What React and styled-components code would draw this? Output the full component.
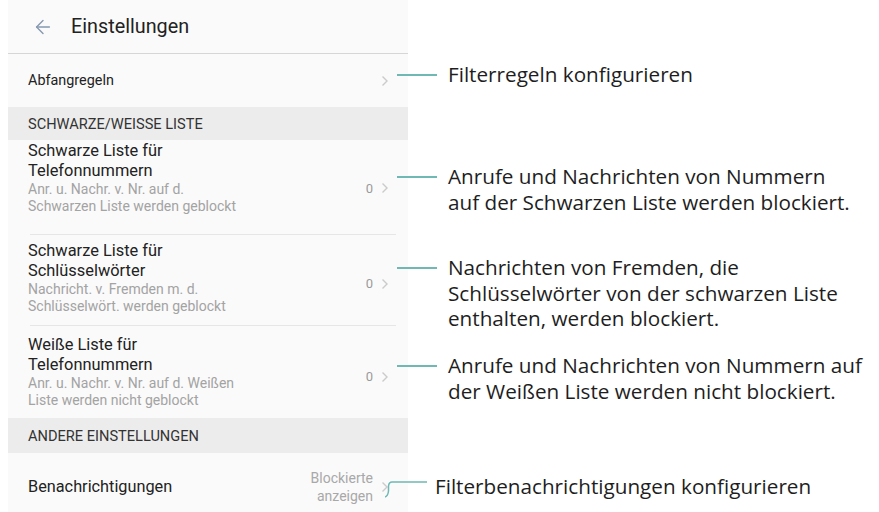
import React from 'react'
import styled, { createGlobalStyle } from 'styled-components'
import { ArrowLeft } from 'lucide-react'

const GlobalStyle = createGlobalStyle`
  html, body {
    margin: 0;
    padding: 0;
    background: #ffffff;
  }
  body {
    font-family: Roboto, "Noto Sans", sans-serif;
    color: #222;
  }
`

const settings = [
  {
    title: ['Abfangregeln'],
    size: 14.4,
    height: 53,
    pad: 0,
    centered: true,
    noteTop: 8,
    note: ['Filterregeln konfigurieren']
  },
  { section: 'SCHWARZE/WEISSE LISTE', height: 33 },
  {
    title: ['Schwarze Liste für', 'Telefonnummern'],
    sub: ['Anr. u. Nachr. v. Nr. auf d.', 'Schwarzen Liste werden geblockt'],
    value: '0',
    height: 95,
    pad: 1,
    divider: true,
    noteTop: 24,
    note: ['Anrufe und Nachrichten von Nummern', 'auf der Schwarzen Liste werden blockiert.']
  },
  {
    title: ['Schwarze Liste für', 'Schlüsselwörter'],
    sub: ['Nachricht. v. Fremden m. d.', 'Schlüsselwört. werden geblockt'],
    value: '0',
    height: 91,
    pad: 6,
    divider: true,
    noteTop: 20,
    note: ['Nachrichten von Fremden, die', 'Schlüsselwörter von der schwarzen Liste', 'enthalten, werden blockiert.']
  },
  {
    title: ['Weiße Liste für', 'Telefonnummern'],
    sub: ['Anr. u. Nachr. v. Nr. auf d. Weißen', 'Liste werden nicht geblockt'],
    value: '0',
    height: 92,
    pad: 9,
    noteTop: 27,
    note: ['Anrufe und Nachrichten von Nummern auf', 'der Weißen Liste werden nicht blockiert.']
  },
  { section: 'ANDERE EINSTELLUNGEN', height: 35 },
  {
    title: ['Benachrichtigungen'],
    size: 16.3,
    value: ['Blockierte', 'anzeigen'],
    height: 62,
    pad: 6,
    centered: true,
    bracket: true,
    noteTop: 21,
    note: ['Filterbenachrichtigungen konfigurieren']
  }
]

const Chevron = () => (
  <svg width="8" height="12" viewBox="0 0 8 12">
    <path d="M1.5 1.5 L6 6 L1.5 10.5" fill="none" stroke="#cbcbcb" strokeWidth="1.4" />
  </svg>
)

// teal pointer from the list entry to its explanation
const Leader = ({ bracket }) =>
  bracket ? (
    <LeaderSvg width="50" height="26" viewBox="0 0 50 26" shift={-12}>
      <path d="M0 23 Q3 22 3.5 17 L3.5 12 Q4 8 7 8 H42" fill="none" stroke="#6fb8b4" strokeWidth="1.5" />
    </LeaderSvg>
  ) : (
    <LeaderSvg width="51" height="26" viewBox="0 0 51 26" shift={0}>
      <path d="M0 13 H40" fill="none" stroke="#6fb8b4" strokeWidth="1.8" />
    </LeaderSvg>
  )

const App = () => {
  return (
    <>
      <GlobalStyle />
      <Page>
        <Line>
          <Header>
            <ArrowLeft size={22} strokeWidth={1.5} color="#8599b0" />
            <HeaderTitle>Einstellungen</HeaderTitle>
          </Header>
          <div />
        </Line>

        {settings.map((item, idx) => {
          if (item.section) {
            return (
              <Line key={idx}>
                <Section height={item.height}>{item.section}</Section>
                <div />
              </Line>
            )
          }
          return (
            <Line key={idx}>
              <Row height={item.height} pad={item.pad} centered={item.centered}>
                <RowText>
                  {item.title.map(t => <Title key={t} size={item.size}>{t}</Title>)}
                  {item.sub && item.sub.map(s => <Sub key={s}>{s}</Sub>)}
                </RowText>
                <RowValue>
                  {Array.isArray(item.value) ? (
                    <SmallValue>{item.value.map(v => <span key={v}>{v}</span>)}</SmallValue>
                  ) : (
                    item.value && <Value>{item.value}</Value>
                  )}
                  <Chevron />
                </RowValue>
                {item.divider && <Divider />}
              </Row>
              <Note top={item.noteTop}>
                <Leader bracket={item.bracket} />
                <NoteText>
                  {item.note.map(n => <span key={n}>{n}</span>)}
                </NoteText>
              </Note>
            </Line>
          )
        })}
      </Page>
    </>
  )
}

const Page = styled.div`
  width: 879px;
  height: 512px;
  overflow: hidden;
  padding-left: 8px;
  box-sizing: border-box;
`

const Line = styled.div`
  display: grid;
  grid-template-columns: 400px 1fr;
  align-items: start;
`

const Header = styled.div`
  height: 53px;
  border-bottom: 1px solid #d6d6d6;
  background: #fafafa;
  display: flex;
  align-items: center;
  padding-left: 24px;
  gap: 17px;
  box-sizing: content-box;
`

const HeaderTitle = styled.span`
  font-size: 19.8px;
  color: #222;
`

const Section = styled.div`
  height: ${p => p.height}px;
  background: #ececec;
  display: flex;
  align-items: center;
  padding-left: 20px;
  font-size: 14.6px;
  color: #333;
`

const Row = styled.div`
  position: relative;
  height: ${p => p.height}px;
  box-sizing: border-box;
  background: #fafafa;
  display: flex;
  align-items: ${p => (p.centered ? 'center' : 'flex-start')};
  padding: ${p => p.pad}px 19px 0 20px;
`

const RowText = styled.div`
  flex: 1;
  display: flex;
  flex-direction: column;
`

const Title = styled.span`
  font-size: ${p => p.size || 16.4}px;
  line-height: 20px;
  color: #222;
`

const Sub = styled.span`
  font-size: 14px;
  line-height: 16.5px;
  color: #a3a3a3;
  &:first-of-type {
    margin-top: 2px;
  }
`

const RowValue = styled.div`
  display: flex;
  align-items: center;
  gap: 8px;
  align-self: center;
`

const Value = styled.span`
  font-size: 13px;
  color: #9a9a9a;
`

const SmallValue = styled.span`
  display: flex;
  flex-direction: column;
  align-items: flex-end;
  font-size: 14px;
  line-height: 18px;
  color: #a8a8a8;
`

const Divider = styled.div`
  position: absolute;
  left: 22px;
  right: 12px;
  bottom: 0;
  height: 1px;
  background: #e6e6e6;
`

const Note = styled.div`
  position: relative;
  z-index: 1;
  display: flex;
  align-items: flex-start;
  height: 0;
  overflow: visible;
  margin-left: -11px;
  padding-top: ${p => p.top}px;
`

const LeaderSvg = styled.svg`
  flex: none;
  margin-left: ${p => p.shift}px;
`

const NoteText = styled.div`
  display: flex;
  flex-direction: column;
  font-family: "Open Sans", sans-serif;
  font-size: 20.7px;
  line-height: 25.5px;
  color: #1e1e1e;
  white-space: nowrap;
`

export default App
